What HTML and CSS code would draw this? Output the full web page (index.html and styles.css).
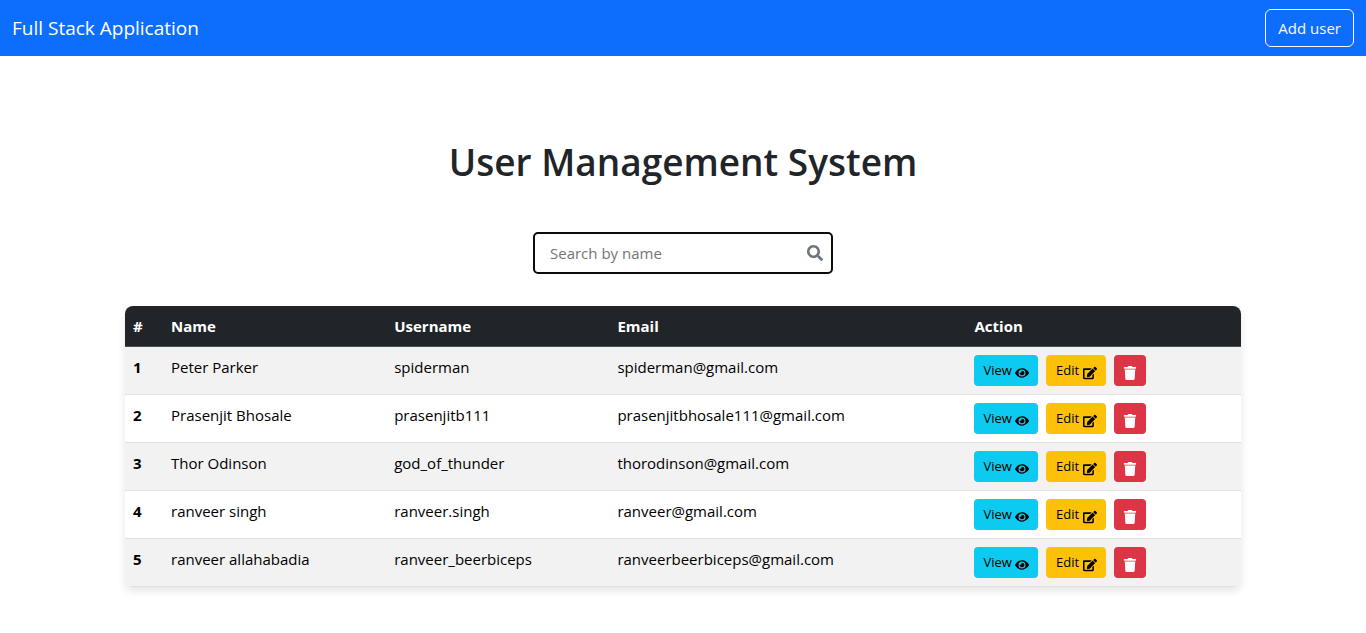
FILE: index.html
```
<!DOCTYPE html>
<html lang="en">
<head>
<meta charset="utf-8">
<meta name="viewport" content="width=device-width, initial-scale=1">
<title>Full Stack Application</title>
<link rel="stylesheet" href="styles.css">
</head>
<body>
<svg class="sprite" aria-hidden="true">
  <symbol id="search" viewBox="0 0 512 512"><path d="M505 442.700L405.300 343c-4.500-4.500-10.600-7-17-7H372c27.600-35.300 44-79.700 44-128C416 93.100 322.900 0 208 0S0 93.100 0 208s93.100 208 208 208c48.300 0 92.700-16.400 128-44v16.300c0 6.400 2.500 12.500 7 17l99.700 99.700c9.400 9.400 24.600 9.400 33.900 0l28.300-28.300c9.400-9.400 9.400-24.600.1-34zM208 336c-70.700 0-128-57.200-128-128 0-70.700 57.200-128 128-128 70.700 0 128 57.200 128 128 0 70.700-57.200 128-128 128z"/></symbol>
  <symbol id="eye" viewBox="0 0 576 512"><path d="M572.520 241.400C518.290 135.590 410.930 64 288 64S57.680 135.640 3.480 241.410a32.350 32.350 0 0 0 0 29.190C57.710 376.410 165.070 448 288 448s230.320-71.640 284.520-177.410a32.350 32.350 0 0 0 0-29.190zM288 400a144 144 0 1 1 144-144 143.930 143.930 0 0 1-144 144zm0-240a95.310 95.310 0 0 0-25.310 3.790 47.850 47.850 0 0 1-66.900 66.900A95.780 95.780 0 1 0 288 160z"/></symbol>
  <symbol id="edit" viewBox="0 0 576 512"><path d="M402.600 83.200l90.200 90.200c3.800 3.800 3.800 10 0 13.800L274.400 405.600l-92.800 10.300c-12.400 1.400-22.900-9.100-21.500-21.500l10.300-92.800L388.800 83.200c3.800-3.800 10-3.800 13.800 0zm162-22.900l-48.800-48.800c-15.200-15.200-39.900-15.200-55.200 0l-35.400 35.400c-3.800 3.800-3.800 10 0 13.800l90.200 90.200c3.800 3.800 10 3.800 13.800 0l35.400-35.400c15.200-15.300 15.200-40 0-55.200zM384 346.200V448H64V128h229.800c3.200 0 6.200-1.300 8.500-3.500l40-40c7.600-7.600 2.200-20.500-8.500-20.500H48C21.500 64 0 85.500 0 112v352c0 26.500 21.500 48 48 48h352c26.500 0 48-21.500 48-48V306.200c0-10.700-12.900-16-20.500-8.500l-40 40c-2.200 2.300-3.500 5.300-3.500 8.500z"/></symbol>
  <symbol id="trash" viewBox="0 0 448 512"><path d="M432 32H312l-9.400-18.700A24 24 0 0 0 281.100 0H166.800a23.720 23.720 0 0 0-21.400 13.300L136 32H16A16 16 0 0 0 0 48v32a16 16 0 0 0 16 16h416a16 16 0 0 0 16-16V48a16 16 0 0 0-16-16zM53.200 467a48 48 0 0 0 47.900 45h245.800a48 48 0 0 0 47.900-45L416 128H32z"/></symbol>
</svg>
<nav class="navbar">
  <a class="brand" href="#">Full Stack Application</a>
  <button class="add-user" type="button">Add user</button>
</nav>
<main class="container">
  <h1 class="title">User Management System</h1>
  <form class="search" role="search">
    <input class="search-input" type="text" placeholder="Search by name" aria-label="Search by name">
    <svg class="search-icon" aria-hidden="true"><use href="#search"/></svg>
  </form>
  <table class="users">
    <colgroup><col class="col-index"><col class="col-name"><col class="col-username"><col class="col-email"><col></colgroup>
    <thead>
      <tr><th scope="col">#</th><th scope="col">Name</th><th scope="col">Username</th><th scope="col">Email</th><th scope="col">Action</th></tr>
    </thead>
    <tbody>
      <tr>
        <th scope="row">1</th><td>Peter Parker</td><td>spiderman</td><td>spiderman@gmail.com</td>
        <td><div class="actions"><button class="btn view" type="button">View <svg class="icon"><use href="#eye"/></svg></button><button class="btn edit" type="button">Edit <svg class="icon"><use href="#edit"/></svg></button><button class="btn delete" type="button" aria-label="Delete"><svg class="icon"><use href="#trash"/></svg></button></div></td>
      </tr>
      <tr>
        <th scope="row">2</th><td>Prasenjit Bhosale</td><td>prasenjitb111</td><td>prasenjitbhosale111@gmail.com</td>
        <td><div class="actions"><button class="btn view" type="button">View <svg class="icon"><use href="#eye"/></svg></button><button class="btn edit" type="button">Edit <svg class="icon"><use href="#edit"/></svg></button><button class="btn delete" type="button" aria-label="Delete"><svg class="icon"><use href="#trash"/></svg></button></div></td>
      </tr>
      <tr>
        <th scope="row">3</th><td>Thor Odinson</td><td>god_of_thunder</td><td>thorodinson@gmail.com</td>
        <td><div class="actions"><button class="btn view" type="button">View <svg class="icon"><use href="#eye"/></svg></button><button class="btn edit" type="button">Edit <svg class="icon"><use href="#edit"/></svg></button><button class="btn delete" type="button" aria-label="Delete"><svg class="icon"><use href="#trash"/></svg></button></div></td>
      </tr>
      <tr>
        <th scope="row">4</th><td>ranveer singh</td><td>ranveer.singh</td><td>ranveer@gmail.com</td>
        <td><div class="actions"><button class="btn view" type="button">View <svg class="icon"><use href="#eye"/></svg></button><button class="btn edit" type="button">Edit <svg class="icon"><use href="#edit"/></svg></button><button class="btn delete" type="button" aria-label="Delete"><svg class="icon"><use href="#trash"/></svg></button></div></td>
      </tr>
      <tr>
        <th scope="row">5</th><td>ranveer allahabadia</td><td>ranveer_beerbiceps</td><td>ranveerbeerbiceps@gmail.com</td>
        <td><div class="actions"><button class="btn view" type="button">View <svg class="icon"><use href="#eye"/></svg></button><button class="btn edit" type="button">Edit <svg class="icon"><use href="#edit"/></svg></button><button class="btn delete" type="button" aria-label="Delete"><svg class="icon"><use href="#trash"/></svg></button></div></td>
      </tr>
    </tbody>
  </table>
</main>
</body>
</html>
```
FILE: styles.css
```
* { box-sizing: border-box; }

body {
  margin: 0;
  background: #fff;
  color: #212529;
  font: 15px/24px "Segoe UI", "Open Sans", "Noto Sans", sans-serif;
}

button, input { font: inherit; }
button { cursor: pointer; }

.sprite { display: none; }

.navbar {
  display: flex;
  align-items: center;
  justify-content: space-between;
  min-height: 56px;
  padding: 8px 12px;
  background: #0d6efd;
}

.brand {
  color: #fff;
  font-size: 19px;
  line-height: 30px;
  text-decoration: none;
}

.add-user {
  padding: 6px 12px;
  border: 1px solid #f8f9fa;
  border-radius: 6px;
  background: transparent;
  color: #f8f9fa;
}

.container {
  max-width: 1140px;
  margin: 0 auto;
  padding: 82px 12px 24px;
}

.title {
  margin: 0 0 46px;
  font-size: 37px;
  font-weight: 600;
  line-height: 48px;
  text-align: center;
}

.search {
  display: grid;
  align-items: center;
  width: 300px;
  max-width: 100%;
  margin: 0 auto 32px;
}

.search-input {
  grid-area: 1 / 1;
  width: 100%;
  height: 42px;
  padding: 7px 40px 7px 15px;
  border: 2px solid #0b0c0e;
  border-radius: 5px;
  outline: 0;
  background: #fff;
  color: #212529;
}

.search-input::placeholder { color: #757575; opacity: 1; }

.search-icon {
  grid-area: 1 / 1;
  justify-self: end;
  width: 16px;
  height: 16px;
  margin-right: 10px;
  fill: #6c757d;
}

.users {
  width: 100%;
  border-spacing: 0;
  border-radius: 8px;
  overflow: hidden;
  table-layout: fixed;
  color: #000;
  box-shadow: 0 4px 8px rgba(0, 0, 0, 0.1);
}

.col-index { width: 38px; }
.col-name { width: 20%; }
.col-username { width: 20%; }
.col-email { width: 32%; }

.users th, .users td {
  padding: 8px;
  border-bottom: 1px solid #dee2e6;
  text-align: left;
  vertical-align: top;
}

.users th { font-weight: 700; }

.users thead th {
  border-bottom-color: #4d5154;
  background: #212529;
  color: #fff;
}

.users tbody tr:nth-child(odd) { background: #f2f2f2; }

.actions { display: flex; gap: 8px; }

.btn {
  padding: 4px 8px;
  border: 1px solid transparent;
  border-radius: 4px;
  color: #000;
  font-size: 13px;
  line-height: 21px;
  white-space: nowrap;
}

.view { background-color: #0dcaf0; }
.edit { min-width: 60px; background-color: #ffc107; }
.delete { background-color: #dc3545; color: #fff; }

.icon {
  width: 14px;
  height: 14px;
  margin-top: 2px;
  fill: currentColor;
  vertical-align: middle;
}
```
